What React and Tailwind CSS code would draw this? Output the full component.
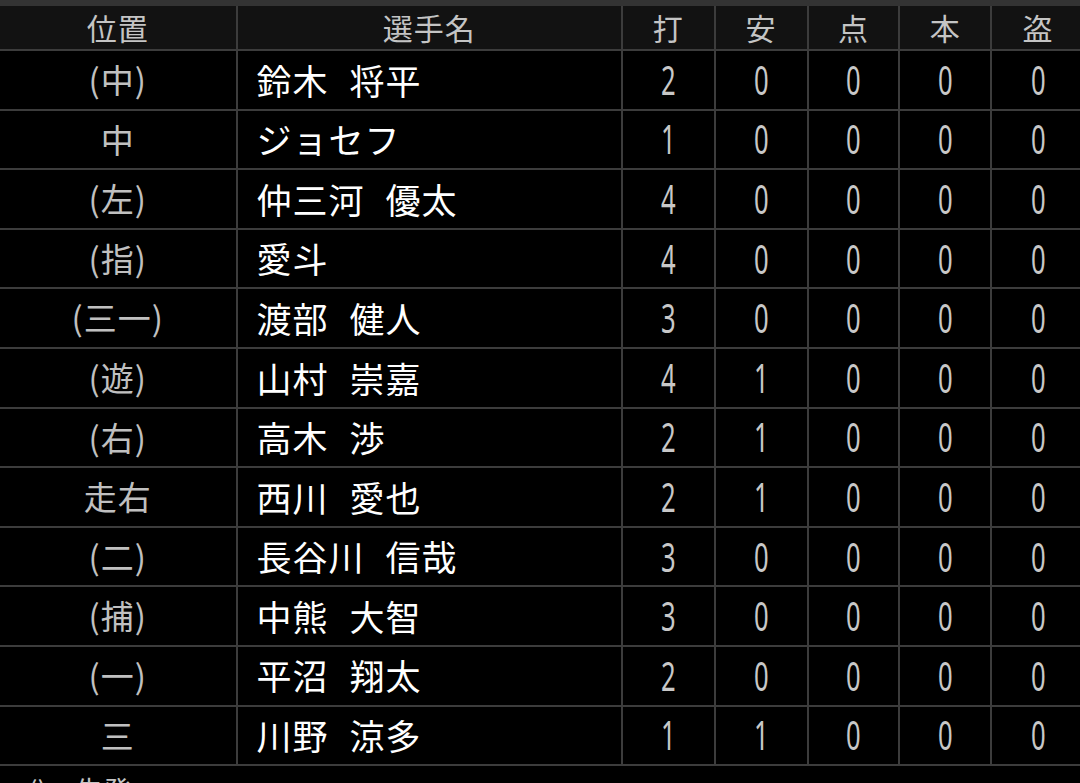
import React from 'react';

const jp = { fontFamily: '"Noto Sans CJK JP", "Noto Sans", sans-serif' };
const num = { fontFamily: '"Noto Sans", "DejaVu Sans", sans-serif' };

const players = [
  ['(中)', '鈴木', '将平', 2, 0, 0, 0, 0],
  ['中', 'ジョセフ', '', 1, 0, 0, 0, 0],
  ['(左)', '仲三河', '優太', 4, 0, 0, 0, 0],
  ['(指)', '愛斗', '', 4, 0, 0, 0, 0],
  ['(三一)', '渡部', '健人', 3, 0, 0, 0, 0],
  ['(遊)', '山村', '崇嘉', 4, 1, 0, 0, 0],
  ['(右)', '高木', '渉', 2, 1, 0, 0, 0],
  ['走右', '西川', '愛也', 2, 1, 0, 0, 0],
  ['(二)', '長谷川', '信哉', 3, 0, 0, 0, 0],
  ['(捕)', '中熊', '大智', 3, 0, 0, 0, 0],
  ['(一)', '平沼', '翔太', 2, 0, 0, 0, 0],
  ['三', '川野', '涼多', 1, 1, 0, 0, 0],
];

const statCols = ['w-[93px]', 'w-[93px]', 'w-[92px]', 'w-[92px]', 'w-[92px]'];

export default function App() {
  return (
    <div className="w-[1080px] h-[783px] overflow-hidden bg-black" style={jp}>
      <div className="w-[1084px]">
        <div className="h-[6px] bg-[#333333]" />

        {/* Header */}
        <div className="flex h-[45px] bg-[#121212] border-b-2 border-[#3c3c3c] text-[30px] tracking-[1px] text-[#c4c4c4]">
          <div className="w-[238px] border-r-2 border-[#3c3c3c] flex items-center justify-center">位置</div>
          <div className="w-[386px] border-r-2 border-[#3c3c3c] flex items-center justify-center">選手名</div>
          {['打', '安', '点', '本', '盗'].map((h, i) => (
            <div
              key={h}
              className={`${statCols[i]} ${i < 4 ? 'border-r-2 border-[#3c3c3c]' : ''} flex items-center justify-center`}
            >
              {h}
            </div>
          ))}
        </div>

        {/* Rows */}
        {players.map((p) => (
          <div key={p[1]} className="flex h-[59.6px] border-b-2 border-[#3c3c3c]">
            <div className="w-[238px] border-r-2 border-[#3c3c3c] flex items-center justify-center text-[33px] tracking-[1px] text-[#c0c0c0]">
              {p[0]}
            </div>
            <div className="w-[386px] border-r-2 border-[#3c3c3c] flex items-center gap-[21px] pl-[19px] text-[35px] tracking-[1px] text-white">
              <span>{p[1]}</span>
              {p[2] && <span>{p[2]}</span>}
            </div>
            {p.slice(3).map((v, i) => (
              <div
                key={i}
                className={`${statCols[i]} ${i < 4 ? 'border-r-2 border-[#3c3c3c]' : ''} flex items-center justify-center text-[40px] text-[#c8c8c8]`}
                style={num}
              >
                <span className="inline-block scale-x-[0.64]">{v}</span>
              </div>
            ))}
          </div>
        ))}

        <div className="pl-[28px] pt-[4px] text-[28px] leading-[40px] text-[#c4c4c4]">()…先発</div>
      </div>
    </div>
  );
}
